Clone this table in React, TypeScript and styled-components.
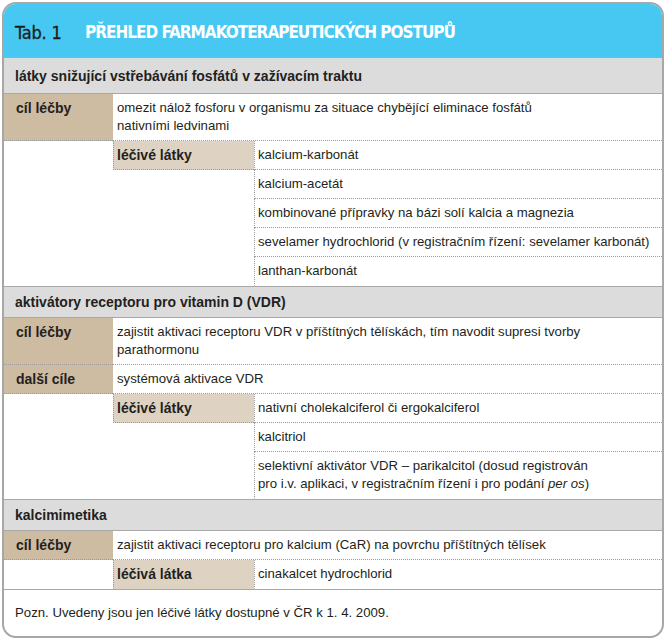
import React from "react";
import styled, { createGlobalStyle } from "styled-components";

const Global = createGlobalStyle`
  html, body { margin: 0; padding: 0; background: #ffffff; }
  body { font-family: "Liberation Sans", Arial, sans-serif; color: #231f20; }
`;

const Card = styled.div`
  margin: 2px 0 0 2px;
  width: 658px;
  border: 2px solid #a7a7a7;
  border-radius: 14px;
  overflow: hidden;
  background: #fff;
`;

const Header = styled.div`
  height: 53px;
  background: #46c8f3;
  display: flex;
  align-items: center;
  padding: 3px 0 0 11px;
  box-sizing: border-box;
  font-family: "DejaVu Sans Condensed", "DejaVu Sans", sans-serif;
  font-stretch: condensed;
  font-size: 17px;
`;

const TabNo = styled.span`
  color: #1c1c1c;
  font-size: 18px;
  width: 70px;
  letter-spacing: -0.2px;
  -webkit-text-stroke: 0.3px #1c1c1c;
`;

const Title = styled.span`
  color: #ffffff;
  font-weight: 700;
  letter-spacing: -1px;
`;

const SectionTitle = styled.div<{ $first?: boolean }>`
  background: #dcdcdd;
  border-top: 1px solid #a9a9a9;
  border-bottom: 1px solid #a9a9a9;
  padding: ${(p) => (p.$first ? "9px 11px 8px" : "6px 11px 6px")};
  font-family: "Liberation Sans", Arial, sans-serif;
  font-size: 14px;
  line-height: 18px;
  font-weight: 700;
`;

const Grid = styled.div`
  display: grid;
  grid-template-columns: 109px 141px 1fr;
  font-family: "Liberation Sans", Arial, sans-serif;
  font-size: 13.2px;
  line-height: 18px;
`;

const Cell = styled.div<{ $last?: boolean }>`
  padding: 5px 6px 5px 10px;
  border-bottom: 1px dotted ${(p) => (p.$last ? "transparent" : "#9a9a9a")};
`;

const GoalLabel = styled(Cell)`
  grid-column: 1;
  background: #cdbba2;
  font-weight: 700;
  font-size: 14px;
  padding-left: 12px;
`;

const GoalValue = styled(Cell)`
  grid-column: 2 / 4;
  padding-left: 4px;
`;

const Blank = styled.div`
  grid-column: 1;
`;

const BlankSub = styled.div`
  grid-column: 2;
`;

const SubLabel = styled(Cell)`
  grid-column: 2;
  background: #ded3c2;
  font-weight: 700;
  font-size: 14px;
  padding-left: 3px;
  border-left: 1px dotted #9a9a9a;
`;

const SubValue = styled(Cell)`
  grid-column: 3;
  padding-left: 3px;
  border-left: 1px dotted #9a9a9a;
`;

const Note = styled.div`
  border-top: 1px solid #a9a9a9;
  padding: 14px 11px 14px;
  font-family: "Liberation Sans", Arial, sans-serif;
  font-size: 13.2px;
  line-height: 18px;
`;

type Sub = { label?: string; values: React.ReactNode[] };
type Section = {
  title: string;
  goals: { label: string; value: React.ReactNode }[];
  sub: Sub;
  first?: boolean;
};

const sections: Section[] = [
  {
    title: "látky snižující vstřebávání fosfátů v zažívacím traktu",
    first: true,
    goals: [
      {
        label: "cíl léčby",
        value: (
          <>
            omezit nálož fosforu v organismu za situace chybějící eliminace fosfátů
            <br />
            nativními ledvinami
          </>
        ),
      },
    ],
    sub: {
      label: "léčivé látky",
      values: [
        "kalcium-karbonát",
        "kalcium-acetát",
        "kombinované přípravky na bázi solí kalcia a magnezia",
        "sevelamer hydrochlorid (v registračním řízení: sevelamer karbonát)",
        "lanthan-karbonát",
      ],
    },
  },
  {
    title: "aktivátory receptoru pro vitamin D (VDR)",
    goals: [
      {
        label: "cíl léčby",
        value: (
          <>
            zajistit aktivaci receptoru VDR v příštítných tělískách, tím navodit supresi tvorby
            <br />
            parathormonu
          </>
        ),
      },
      { label: "další cíle", value: "systémová aktivace VDR" },
    ],
    sub: {
      label: "léčivé látky",
      values: [
        "nativní cholekalciferol či ergokalciferol",
        "kalcitriol",
        <>
          selektivní aktivátor VDR – parikalcitol (dosud registrován
          <br />
          pro i.v. aplikaci, v registračním řízení i pro podání <i>per os</i>)
        </>,
      ],
    },
  },
  {
    title: "kalcimimetika",
    goals: [
      {
        label: "cíl léčby",
        value: "zajistit aktivaci receptoru pro kalcium (CaR) na povrchu příštítných tělísek",
      },
    ],
    sub: { label: "léčivá látka", values: ["cinakalcet hydrochlorid"] },
  },
];

export default function App() {
  return (
    <>
      <Global />
      <Card>
        <Header>
          <TabNo>Tab. 1</TabNo>
          <Title>PŘEHLED FARMAKOTERAPEUTICKÝCH POSTUPŮ</Title>
        </Header>
        {sections.map((s) => (
          <React.Fragment key={s.title}>
            <SectionTitle $first={s.first}>{s.title}</SectionTitle>
            <Grid>
              {s.goals.map((g) => (
                <React.Fragment key={g.label}>
                  <GoalLabel>{g.label}</GoalLabel>
                  <GoalValue>{g.value}</GoalValue>
                </React.Fragment>
              ))}
              {s.sub.values.map((v, i) => {
                const last = i === s.sub.values.length - 1;
                return (
                  <React.Fragment key={i}>
                    <Blank />
                    {i === 0 ? (
                      <SubLabel $last={last}>{s.sub.label}</SubLabel>
                    ) : (
                      <BlankSub />
                    )}
                    <SubValue $last={last}>{v}</SubValue>
                  </React.Fragment>
                );
              })}
            </Grid>
          </React.Fragment>
        ))}
        <Note>Pozn. Uvedeny jsou jen léčivé látky dostupné v ČR k 1. 4. 2009.</Note>
      </Card>
    </>
  );
}
